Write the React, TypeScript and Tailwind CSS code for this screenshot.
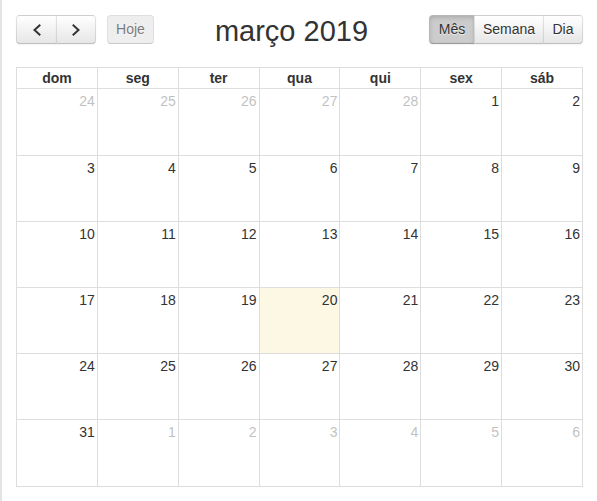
const days = ["dom", "seg", "ter", "qua", "qui", "sex", "sáb"];

const weeks: { n: number; other?: boolean; today?: boolean }[][] = [
  [{ n: 24, other: true }, { n: 25, other: true }, { n: 26, other: true }, { n: 27, other: true }, { n: 28, other: true }, { n: 1 }, { n: 2 }],
  [{ n: 3 }, { n: 4 }, { n: 5 }, { n: 6 }, { n: 7 }, { n: 8 }, { n: 9 }],
  [{ n: 10 }, { n: 11 }, { n: 12 }, { n: 13 }, { n: 14 }, { n: 15 }, { n: 16 }],
  [{ n: 17 }, { n: 18 }, { n: 19 }, { n: 20, today: true }, { n: 21 }, { n: 22 }, { n: 23 }],
  [{ n: 24 }, { n: 25 }, { n: 26 }, { n: 27 }, { n: 28 }, { n: 29 }, { n: 30 }],
  [{ n: 31 }, { n: 1, other: true }, { n: 2, other: true }, { n: 3, other: true }, { n: 4, other: true }, { n: 5, other: true }, { n: 6, other: true }],
];

const btn =
  "h-[29px] flex items-center justify-center border border-[rgba(0,0,0,0.1)] border-b-[rgba(0,0,0,0.25)] text-[#333] text-[14px] [text-shadow:0_1px_1px_rgba(255,255,255,0.75)]";
const btnUp =
  "bg-[linear-gradient(to_bottom,#fff,#e6e6e6)] shadow-[inset_0_1px_0_rgba(255,255,255,0.2),0_1px_2px_rgba(0,0,0,0.05)]";
const btnDown = "bg-[#ccc] shadow-[inset_0_2px_4px_rgba(0,0,0,0.15),0_1px_2px_rgba(0,0,0,0.05)]";

const Arrow = ({ left }: { left?: boolean }) => (
  <svg width="10" height="12" viewBox="0 0 10 12" fill="none" stroke="#333" strokeWidth="2" strokeLinecap="square">
    {left ? <polyline points="7.5,1.5 2.5,6 7.5,10.5" /> : <polyline points="2.5,1.5 7.5,6 2.5,10.5" />}
  </svg>
);

export default function App() {
  return (
    <div className="min-h-[501px] border-l-2 border-[#e4e4e4] font-['Liberation_Sans',Arial,sans-serif] text-[#333] text-[14px]">
      <div className="ml-[14px] w-[567px] pt-[15px]">
        <div className="flex items-center h-[29px] mb-[23px]">
          <div className="flex items-center">
            <div className="flex">
              <button className={`${btn} ${btnUp} w-[41px] rounded-l-[4px]`}>
                <Arrow left />
              </button>
              <button className={`${btn} ${btnUp} w-[40px] -ml-px rounded-r-[4px]`}>
                <Arrow />
              </button>
            </div>
            <button className={`${btn} ml-[11px] w-[47px] rounded-[4px] bg-[#e6e6e6] opacity-65`}>Hoje</button>
          </div>
          <div className="flex-1 text-center">
            <h2 className="text-[29px] leading-[29px] relative top-[2px]">março 2019</h2>
          </div>
          <div className="flex">
            <button className={`${btn} ${btnDown} w-[46px] rounded-l-[4px]`}>Mês</button>
            <button className={`${btn} ${btnUp} w-[70px] -ml-px`}>Semana</button>
            <button className={`${btn} ${btnUp} w-[40px] -ml-px rounded-r-[4px]`}>Dia</button>
          </div>
        </div>

        <div className="border-t border-l border-[#ddd]">
          <div className="grid grid-cols-7">
            {days.map((d) => (
              <div key={d} className="h-[21px] border-r border-b border-[#ddd] text-center font-bold leading-[20px]">
                {d}
              </div>
            ))}
          </div>
          <div className="grid grid-cols-7 grid-rows-[67px_66px_66px_66px_66px_67px]">
            {weeks.flat().map((c, i) => (
              <div
                key={i}
                className={`border-r border-b border-[#ddd] text-right pr-[2px] pt-[2px] leading-[20px] ${c.today ? "bg-[#fcf8e3]" : ""}`}
              >
                <span className={c.other ? "opacity-30" : ""}>{c.n}</span>
              </div>
            ))}
          </div>
        </div>
      </div>
    </div>
  );
}
